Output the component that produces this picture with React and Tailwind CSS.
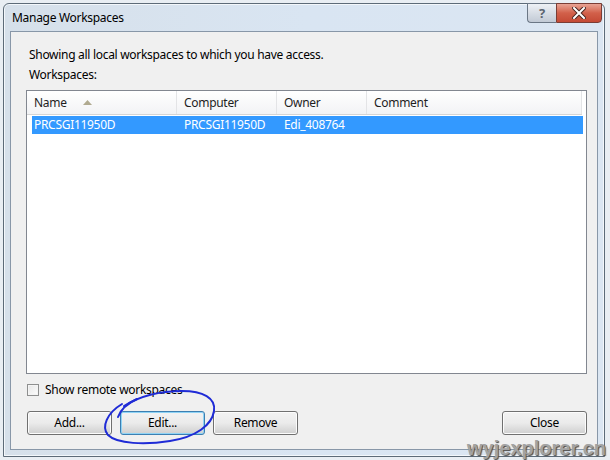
import React from 'react';

const columns = [
  { key: 'name', label: 'Name', width: 'w-[150px]' },
  { key: 'computer', label: 'Computer', width: 'w-[100px]' },
  { key: 'owner', label: 'Owner', width: 'w-[90px]' },
  { key: 'comment', label: 'Comment', width: 'flex-1' },
];

const rows = [{ name: 'PRCSGI11950D', computer: 'PRCSGI11950D', owner: 'Edi_408764', comment: '' }];

const Button = ({ children, focused }) => (
  <button
    className={`w-[85px] h-[24px] rounded-[3px] border text-[12px] text-black bg-gradient-to-b from-[#f2f2f2] via-[#ebebeb] to-[#cfcfcf] ${
      focused ? 'border-[#3c7fb1] shadow-[inset_0_0_0_1px_#8fd3f5]' : 'border-[#707070] shadow-[inset_0_0_0_1px_#fcfcfc]'
    }`}
  >
    {children}
  </button>
);

const App = () => {
  return (
    <div className="relative w-[610px] h-[460px] overflow-hidden bg-[#e9eef3] pl-[3px] pt-[3px] font-['Noto_Sans','Open_Sans',sans-serif] text-[12px] tracking-[-0.3px] text-black">
      {/* dialog window */}
      <div className="w-[602px] h-[454px] flex flex-col rounded-t-[6px] border border-[#5d6b78] bg-gradient-to-r from-[#d6e0ea] via-[#d9e5f2] to-[#dbe6f2] shadow-[inset_0_0_0_1px_#f3f7fb]">
        {/* title bar */}
        <div className="h-[27px] flex items-start justify-between">
          <span className="pl-[8px] pt-[6px] leading-[16px] text-[12px] text-black">Manage Workspaces</span>
          <div className="flex mr-[2px] -mt-[1px]">
            <div className="w-[29px] h-[20px] rounded-bl-[4px] border border-[#6b7785] border-r-0 bg-gradient-to-b from-[#eef1f5] via-[#d7dde5] to-[#c2cad5] flex items-center justify-center text-[13px] font-bold text-[#5b6470] leading-none">
              ?
            </div>
            <div className="w-[46px] h-[20px] rounded-br-[4px] border border-[#7a3d35] bg-gradient-to-b from-[#e8a394] via-[#d2604a] to-[#c44a35] flex items-center justify-center">
              <svg width="14" height="12" viewBox="0 0 14 12">
                <path d="M2 1 L12 11 M12 1 L2 11" stroke="#4a2620" strokeWidth="4" strokeLinecap="square" />
                <path d="M2 1 L12 11 M12 1 L2 11" stroke="#ffffff" strokeWidth="2" strokeLinecap="square" />
              </svg>
            </div>
          </div>
        </div>

        {/* client area */}
        <div className="flex-1 mx-[6px] mb-[6px] border border-[#8897a8] bg-[#f0f0f0] flex flex-col pl-[15px] pr-[10px]">
          <div className="pl-[3px] mt-[15px] leading-[16px]">Showing all local workspaces to which you have access.</div>
          <div className="pl-[3px] mt-[4px] leading-[16px]">Workspaces:</div>

          {/* list view */}
          <div className="mt-[7px] h-[284px] border border-[#828790] bg-white flex flex-col">
            <div className="flex h-[24px] mr-[4px] border-b border-[#d5d5d5] bg-gradient-to-b from-white to-[#f2f3f5]">
              {columns.map((col, i) => (
                <div
                  key={col.key}
                  className={`${col.width} flex items-center pl-[7px] border-r border-[#e3e4e6] text-[12px] text-[#1e1e1e]`}
                >
                  <span>{col.label}</span>
                  {i === 0 && (
                    <svg className="ml-[16px]" width="9" height="5" viewBox="0 0 9 5">
                      <path d="M0 5 L4.5 0 L9 5 Z" fill="#b0aa90" />
                    </svg>
                  )}
                </div>
              ))}
            </div>
            {rows.map((row) => (
              <div key={row.name} className="flex h-[18px] mt-[1px] ml-[5px] mr-[3px] bg-[#3399ff] text-white items-center">
                <div className="w-[145px] pl-[2px]">{row.name}</div>
                <div className="w-[100px] pl-[7px]">{row.computer}</div>
                <div className="w-[90px] pl-[7px]">{row.owner}</div>
                <div className="flex-1 pl-[7px]">{row.comment}</div>
              </div>
            ))}
          </div>

          <label className="flex items-center mt-[9px] h-[13px]">
            <span className="w-[12px] h-[12px] ml-[1px] border border-[#8e8f8f] bg-gradient-to-br from-[#e6e6e6] to-[#fdfdfd] shadow-[inset_0_0_0_1px_#f4f4f4]" />
            <span className="ml-[6px]">Show remote workspaces</span>
          </label>

          <div className="flex mt-[15px] pl-[1px] gap-[8px]">
            <Button>Add...</Button>
            <Button focused>Edit...</Button>
            <Button>Remove</Button>
            <div className="flex-1" />
            <Button>Close</Button>
          </div>
        </div>
      </div>

      {/* hand drawn mark around Edit */}
      <svg className="absolute left-0 top-0 pointer-events-none" width="610" height="460" viewBox="0 0 610 460">
        <path d="M137 399 C128 403 121 409 118 417" fill="none" stroke="#1f2bd6" strokeWidth="2" strokeLinecap="round" />
        <path
          d="M124 406 C140 396 160 391 182 391 C203 391 216 398 214 411 C212 425 196 437 170 441 C145 445 117 444 108 435 C101 427 107 413 122 404"
          fill="none"
          stroke="#1f2bd6"
          strokeWidth="2"
          strokeLinecap="round"
        />
      </svg>

      {/* watermark */}
      <span className="absolute right-[4px] bottom-[-3px] font-['Liberation_Sans',sans-serif] font-bold text-[20px] tracking-[0px] text-[#a3a3a3] [text-shadow:1px_1px_1px_#4a4a4a]">
        wyjexplorer.cn
      </span>
    </div>
  );
};

export default App;
